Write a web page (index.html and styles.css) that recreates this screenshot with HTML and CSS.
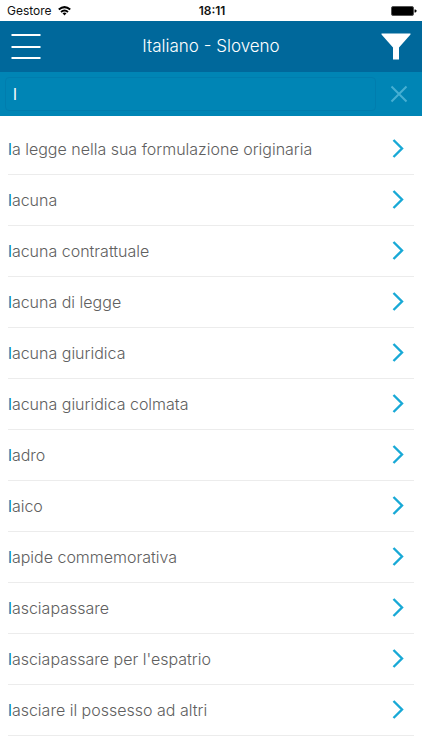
FILE: index.html
```html
<!DOCTYPE html>
<html lang="it">
<head>
<meta charset="utf-8">
<meta name="viewport" content="width=device-width, initial-scale=1">
<title>Italiano - Sloveno</title>
<link rel="stylesheet" href="styles.css">
</head>
<body>
<div class="status">
  <div class="carrier">
    <span>Gestore</span>
    <svg width="13" height="10" viewBox="0 0 13 10" fill="none" stroke="#000" stroke-width="2" aria-hidden="true">
      <path d="M.8 3.6Q6.500-1.400 12.200 3.600M3 6Q6.500 3 10 6"/>
      <path d="M4.500 7.300Q6.500 5.800 8.500 7.300L6.500 9.500Z" fill="#000" stroke="none"/>
    </svg>
  </div>
  <span class="clock">18:11</span>
  <svg class="battery" width="26" height="10" viewBox="0 0 26 10" aria-hidden="true">
    <rect x=".5" y=".5" width="22" height="9" rx="1.500" stroke="#555"/>
    <path d="M23.500 3.500h1l1 1v1l-1 1h-1z"/>
  </svg>
</div>
<header class="bar">
  <button class="icon-button" type="button" aria-label="Menu">
    <svg width="30" height="28" viewBox="0 0 30 28" stroke="#fff" stroke-width="2" aria-hidden="true">
      <path d="M.5 3h29M.5 15h29M.5 26h29"/>
    </svg>
  </button>
  <h1>Italiano - Sloveno</h1>
  <button class="icon-button" type="button" aria-label="Filtro">
    <svg width="30" height="28" viewBox="0 0 30 28" fill="#fff" aria-hidden="true">
      <path d="M.5 1.500h29v1L18 15.500v12h-6v-12L.5 2.500z"/>
    </svg>
  </button>
</header>
<form class="search">
  <input type="text" value="l" aria-label="Cerca">
  <button class="clear" type="button" aria-label="Cancella">
    <svg width="18" height="18" viewBox="0 0 18 18" stroke="#46afd3" stroke-width="2" aria-hidden="true">
      <path d="M1.500 1.500l15 15M16.500 1.500l-15 15"/>
    </svg>
  </button>
</form>
<svg class="symbols" aria-hidden="true">
  <symbol id="chevron" viewBox="0 0 12 20">
    <path d="M1.500 1L10 9.500L1.500 18" fill="none" stroke="#18a9d6" stroke-width="2.400"/>
  </symbol>
</svg>
<main>
  <ul class="results">
    <li><a href="#"><span><mark>l</mark>a legge nella sua formulazione originaria</span><svg class="chevron"><use href="#chevron"/></svg></a></li>
    <li><a href="#"><span><mark>l</mark>acuna</span><svg class="chevron"><use href="#chevron"/></svg></a></li>
    <li><a href="#"><span><mark>l</mark>acuna contrattuale</span><svg class="chevron"><use href="#chevron"/></svg></a></li>
    <li><a href="#"><span><mark>l</mark>acuna di legge</span><svg class="chevron"><use href="#chevron"/></svg></a></li>
    <li><a href="#"><span><mark>l</mark>acuna giuridica</span><svg class="chevron"><use href="#chevron"/></svg></a></li>
    <li><a href="#"><span><mark>l</mark>acuna giuridica colmata</span><svg class="chevron"><use href="#chevron"/></svg></a></li>
    <li><a href="#"><span><mark>l</mark>adro</span><svg class="chevron"><use href="#chevron"/></svg></a></li>
    <li><a href="#"><span><mark>l</mark>aico</span><svg class="chevron"><use href="#chevron"/></svg></a></li>
    <li><a href="#"><span><mark>l</mark>apide commemorativa</span><svg class="chevron"><use href="#chevron"/></svg></a></li>
    <li><a href="#"><span><mark>l</mark>asciapassare</span><svg class="chevron"><use href="#chevron"/></svg></a></li>
    <li><a href="#"><span><mark>l</mark>asciapassare per l'espatrio</span><svg class="chevron"><use href="#chevron"/></svg></a></li>
    <li><a href="#"><span><mark>l</mark>asciare il possesso ad altri</span><svg class="chevron"><use href="#chevron"/></svg></a></li>
  </ul>
</main>
</body>
</html>
```
FILE: styles.css
```css
* {
  box-sizing: border-box;
}

body {
  margin: 0;
  background: #fff;
  font-family: Inter, "Liberation Sans", sans-serif;
  font-size: 16px;
}

button {
  display: flex;
  padding: 0;
  border: 0;
  background: none;
}

.status {
  display: grid;
  grid-template-columns: 1fr auto 1fr;
  align-items: center;
  height: 21px;
  padding: 0 5px 0 7px;
  font-size: 12px;
  color: #111;
}

.carrier {
  display: flex;
  align-items: center;
  gap: 6px;
}

.clock {
  font-weight: 600;
}

.battery {
  justify-self: end;
}

.bar {
  display: flex;
  align-items: center;
  justify-content: space-between;
  height: 51px;
  padding: 0 11px 2px;
  background: #00689b;
  color: #fff;
}

.bar h1 {
  margin: 0;
  font-size: 17px;
  font-weight: 300;
}

.search {
  display: flex;
  align-items: center;
  justify-content: space-between;
  gap: 14px;
  height: 44px;
  padding: 0 14px 0 5px;
  background: #0085b5;
}

.search input {
  flex: 1;
  min-width: 0;
  height: 34px;
  padding: 0 7px;
  border: 1px solid #007dae;
  border-radius: 4px;
  outline: 0;
  background: transparent;
  color: #fff;
  font: inherit;
}

.symbols {
  position: absolute;
  width: 0;
  height: 0;
}

.results {
  margin: 0;
  padding: 8px 8px 0;
  list-style: none;
}

.results li {
  border-bottom: 1px solid #ececec;
}

.results a {
  display: flex;
  align-items: center;
  justify-content: space-between;
  height: 50px;
  padding: 0 10px 0 0;
  color: #606060;
  font-weight: 300;
  text-decoration: none;
}

.results mark {
  background: none;
  color: #0080b0;
  font-weight: 400;
}

.chevron {
  width: 12px;
  height: 20px;
}
```
